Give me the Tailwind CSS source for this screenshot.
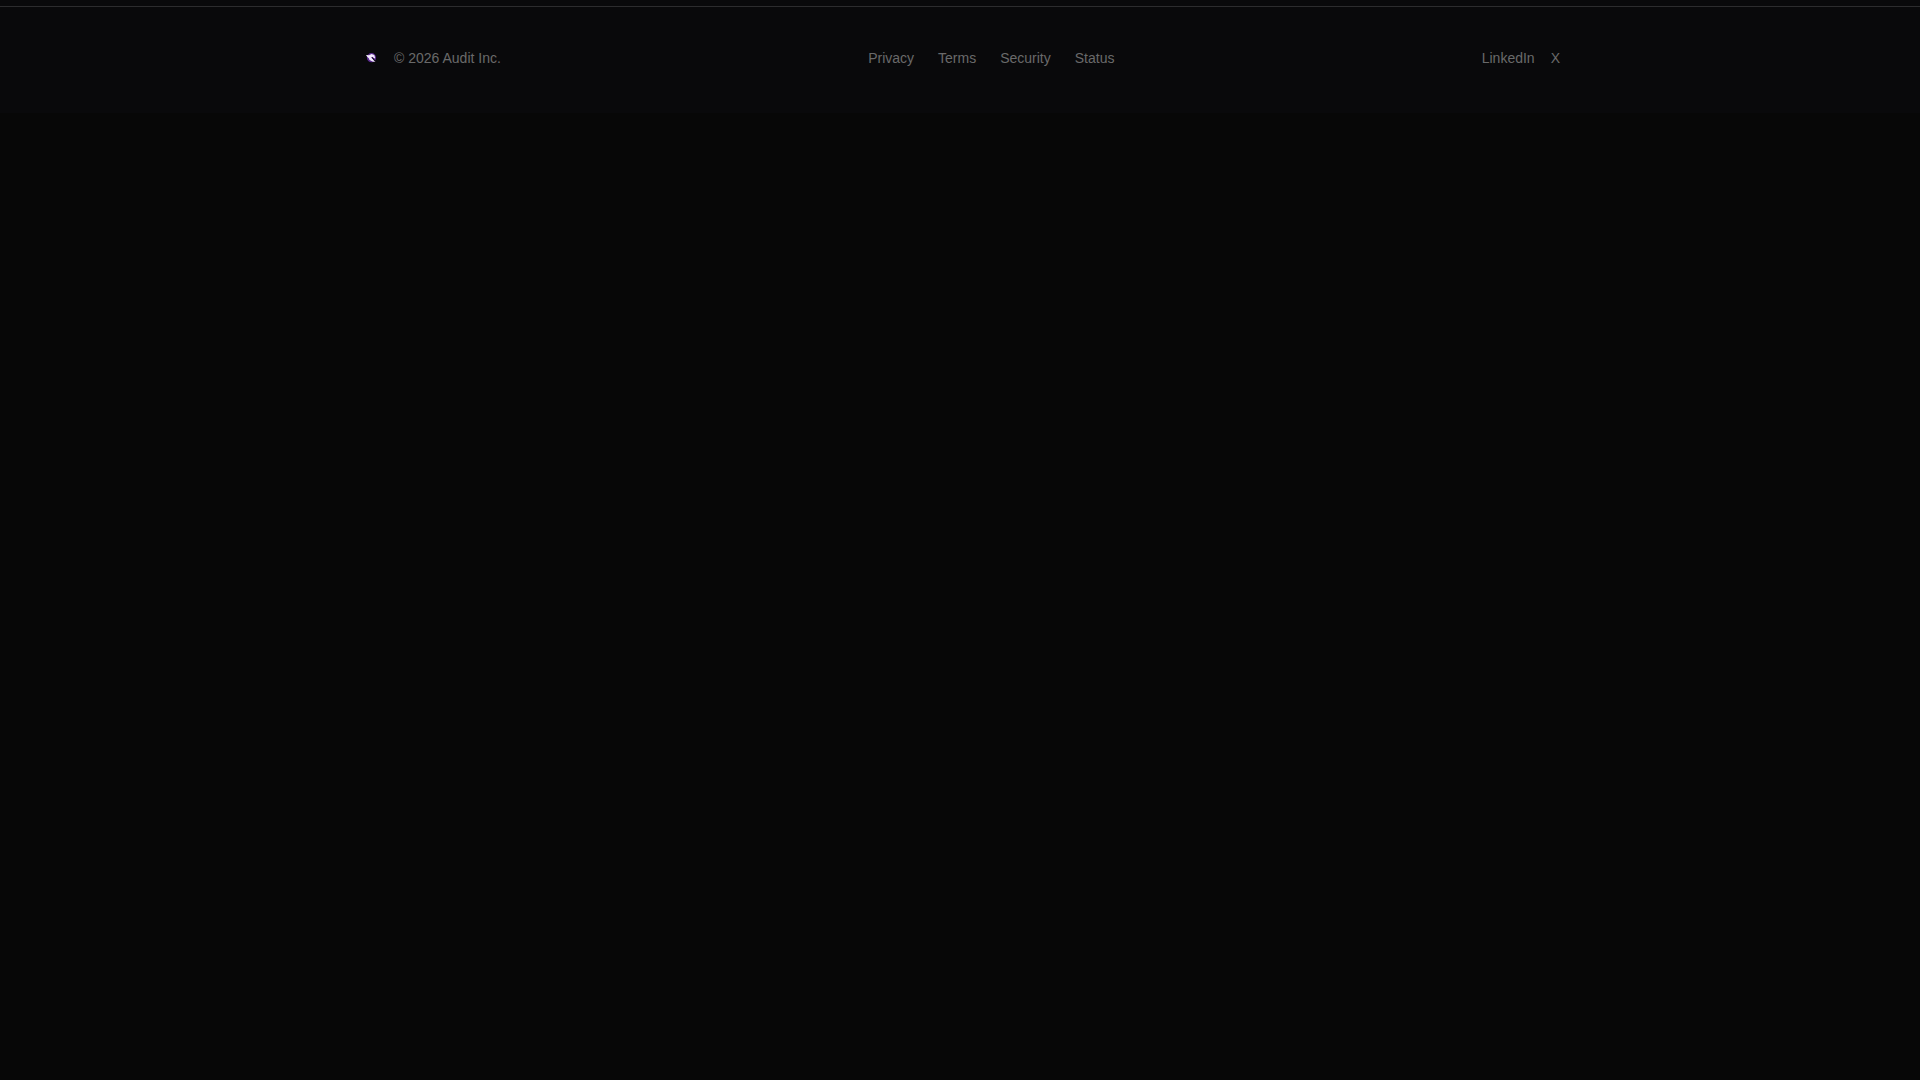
<!DOCTYPE html>
<html lang="en">
<head>
  <meta charset="UTF-8" />
  <meta name="viewport" content="width=device-width, initial-scale=1" />
  <title>Audit</title>
  <script src="https://cdn.jsdelivr.net/npm/@tailwindcss/browser@4"></script>
</head>
<body class="bg-[#070707] min-h-screen font-['Liberation_Sans',sans-serif]">

  <div class="bg-[#09090b] pt-1.5 pb-1">
    <footer class="border-t border-[#2c2c2e] py-10">
      <div class="max-w-[1200px] mx-auto flex items-center justify-between text-sm text-[#69696a]">
        <div class="flex items-center gap-3">
          <svg class="size-[22px]" viewBox="0 0 22 22" aria-hidden="true">
            <circle cx="11.5" cy="10.7" r="4.6" fill="#5b2a92" />
            <path d="M6 8 L9 8.3 L11.5 7 L14.3 8 L15.2 11 L14 11.5 L12.5 9.8 L11.2 10.6 L15.5 15 L12.5 14.5 L9.5 13 L9 11.5 L7 9.5 Z" fill="#f3eafd" />
            <path d="M11.5 10.3 L13 10.5 L15.8 14.5 L14.8 14.6 Z" fill="#120b1c" />
          </svg>
          <span>© 2026 Audit Inc.</span>
        </div>
        <nav class="flex gap-6">
          <a href="#">Privacy</a>
          <a href="#">Terms</a>
          <a href="#">Security</a>
          <a href="#">Status</a>
        </nav>
        <div class="flex gap-4">
          <a href="#">LinkedIn</a>
          <a href="#">X</a>
        </div>
      </div>
    </footer>
  </div>

</body>
</html>
